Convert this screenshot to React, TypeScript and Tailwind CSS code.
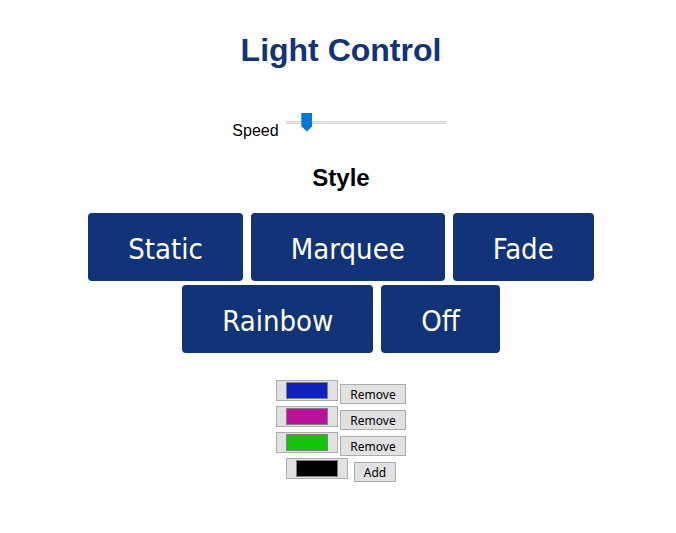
import { useState } from "react";

const STYLES = ["Static", "Marquee", "Fade", "Rainbow", "Off"];

const swatchClass =
  "h-[21px] w-[62px] appearance-none border border-[#adadad] bg-[#e1e1e1] px-[9px] py-px " +
  "[&::-webkit-color-swatch-wrapper]:p-0 [&::-webkit-color-swatch]:rounded-none " +
  "[&::-webkit-color-swatch]:border [&::-webkit-color-swatch]:border-[#808080]";

const smallButtonClass =
  "mt-1 h-5 border border-[#adadad] bg-[#e1e1e1] pt-px text-center font-['Noto_Sans',sans-serif] text-xs leading-4 text-black";

const sliderClass =
  "h-5 w-40 appearance-none bg-transparent " +
  "[&::-webkit-slider-runnable-track]:h-[3px] [&::-webkit-slider-runnable-track]:border " +
  "[&::-webkit-slider-runnable-track]:border-[#d6d6d6] [&::-webkit-slider-runnable-track]:bg-[#e7eaea] " +
  "[&::-webkit-slider-thumb]:-mt-[9px] [&::-webkit-slider-thumb]:h-[19px] [&::-webkit-slider-thumb]:w-[11px] " +
  "[&::-webkit-slider-thumb]:appearance-none [&::-webkit-slider-thumb]:bg-[#0078d7] " +
  "[&::-webkit-slider-thumb]:[clip-path:polygon(0_0,100%_0,100%_72%,50%_100%,0_72%)]";

export default function App() {
  const [speed, setSpeed] = useState(10);
  const [colors, setColors] = useState(["#1022bb", "#bb1099", "#14c40c"]);
  const [draft, setDraft] = useState("#000000");

  return (
    <main className="flex flex-col items-center bg-white pt-8 pr-2 pb-8 pl-3.5 font-['Liberation_Sans',Arial,sans-serif] text-black">
      <h1 className="text-[32px] leading-9 font-bold text-[#113377]">Light Control</h1>

      <div className="mt-11 mr-1 flex items-start gap-[7px]">
        <label htmlFor="speed" className="mt-2 text-base leading-[22px]">
          Speed
        </label>
        <input
          id="speed"
          type="range"
          min={0}
          max={100}
          value={speed}
          onChange={(e) => setSpeed(Number(e.target.value))}
          className={sliderClass}
        />
      </div>

      <h2 className="mt-[22px] text-2xl leading-7 font-bold">Style</h2>

      <div className="mt-[21px] flex flex-wrap justify-center gap-x-2 gap-y-1">
        {STYLES.map((name) => (
          <button
            key={name}
            type="button"
            className="h-[68px] rounded bg-[#113377] px-10 pt-1 font-['DejaVu_Sans_Condensed',Tahoma,sans-serif] text-[29px] leading-9 text-white"
          >
            {name}
          </button>
        ))}
      </div>

      <div className="mt-[27px] flex flex-col items-center gap-0.5">
        {colors.map((color, i) => (
          <div key={i} className="flex items-start gap-0.5">
            <input
              type="color"
              aria-label={`Color ${i + 1}`}
              value={color}
              onChange={(e) => setColors(colors.map((c, j) => (j === i ? e.target.value : c)))}
              className={swatchClass}
            />
            <button
              type="button"
              onClick={() => setColors(colors.filter((_, j) => j !== i))}
              className={`${smallButtonClass} w-[66px]`}
            >
              Remove
            </button>
          </div>
        ))}
        <div className="flex items-start gap-1.5">
          <input
            type="color"
            aria-label="New color"
            value={draft}
            onChange={(e) => setDraft(e.target.value)}
            className={swatchClass}
          />
          <button
            type="button"
            onClick={() => setColors([...colors, draft])}
            className={`${smallButtonClass} w-[42px]`}
          >
            Add
          </button>
        </div>
      </div>
    </main>
  );
}
